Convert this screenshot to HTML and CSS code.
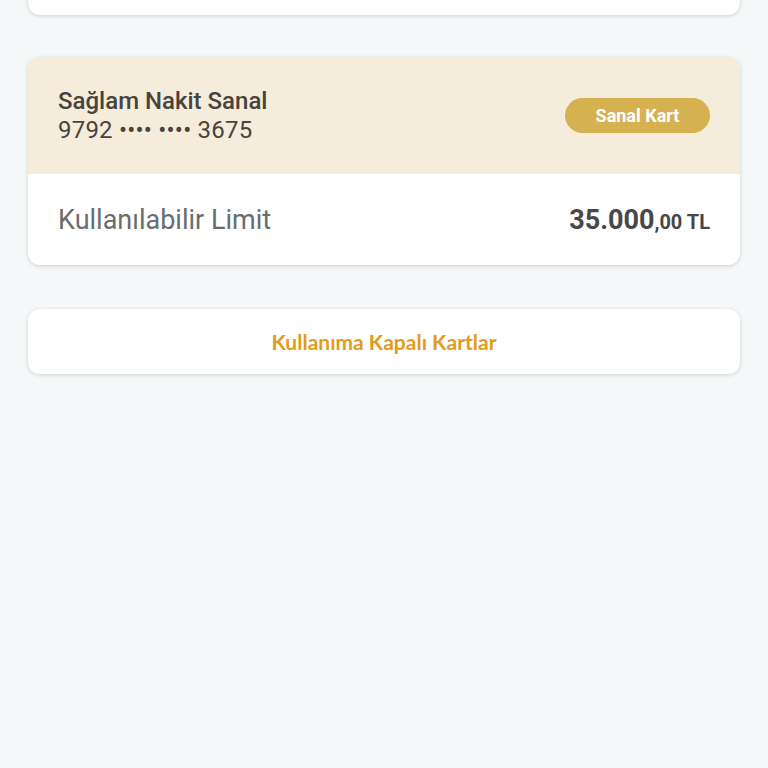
FILE: index.html
```html
<!DOCTYPE html>
<html lang="tr">
<head>
<meta charset="utf-8">
<link rel="stylesheet" href="styles.css">
</head>
<body>
<main class="page">
  <div class="card card-top"></div>
  <section class="card account">
    <div class="account-head">
      <div class="account-info">
        <div class="account-name">Sağlam Nakit Sanal</div>
        <div class="account-number">9792 •••• •••• 3675</div>
      </div>
      <span class="badge">Sanal Kart</span>
    </div>
    <div class="account-body">
      <span class="limit-label">Kullanılabilir Limit</span>
      <span class="limit-value">35.000<span class="limit-small">,00 TL</span></span>
    </div>
  </section>
  <button class="card closed-btn">Kullanıma Kapalı Kartlar</button>
</main>
</body>
</html>
```
FILE: styles.css
```css
html, body {
  margin: 0;
  padding: 0;
  background: #f4f8f8;
  font-family: Roboto, "Liberation Sans", sans-serif;
}
.page {
  display: flex;
  flex-direction: column;
  padding: 0 28px;
  height: 768px;
  overflow: hidden;
}
.card {
  background: #ffffff;
  border-radius: 12px;
  box-shadow: 0 1px 4px rgba(0, 0, 0, 0.16);
}
.card-top {
  height: 40px;
  margin-top: -25px;
  flex-shrink: 0;
}
.account {
  margin-top: 42px;
  overflow: hidden;
  display: flex;
  flex-direction: column;
}
.account-head {
  background: #f5ecdb;
  height: 117px;
  display: flex;
  align-items: center;
  justify-content: space-between;
  padding: 0 30px;
  box-sizing: border-box;
}
.account-info {
  display: flex;
  flex-direction: column;
}
.account-name {
  font-size: 24px;
  font-weight: 500;
  color: #47433d;
  line-height: 29px;
}
.account-number {
  font-size: 24px;
  color: #47433d;
  line-height: 29px;
  letter-spacing: 0.2px;
}
.badge {
  background: #d5b14f;
  color: #ffffff;
  font-weight: 700;
  font-size: 18px;
  height: 35px;
  width: 145px;
  border-radius: 18px;
  display: flex;
  align-items: center;
  justify-content: center;
}
.account-body {
  height: 91px;
  display: flex;
  align-items: center;
  justify-content: space-between;
  padding: 0 30px;
}
.limit-label {
  font-size: 27px;
  color: #6a6c6e;
}
.limit-value {
  font-size: 27px;
  font-weight: 700;
  color: #47474a;
}
.limit-small {
  font-size: 20px;
}
.closed-btn {
  margin-top: 44px;
  height: 65px;
  border: none;
  font-family: Lato, "Open Sans", sans-serif;
  font-weight: 700;
  font-size: 21px;
  color: #e39b1c;
  cursor: pointer;
  flex-shrink: 0;
}
```
